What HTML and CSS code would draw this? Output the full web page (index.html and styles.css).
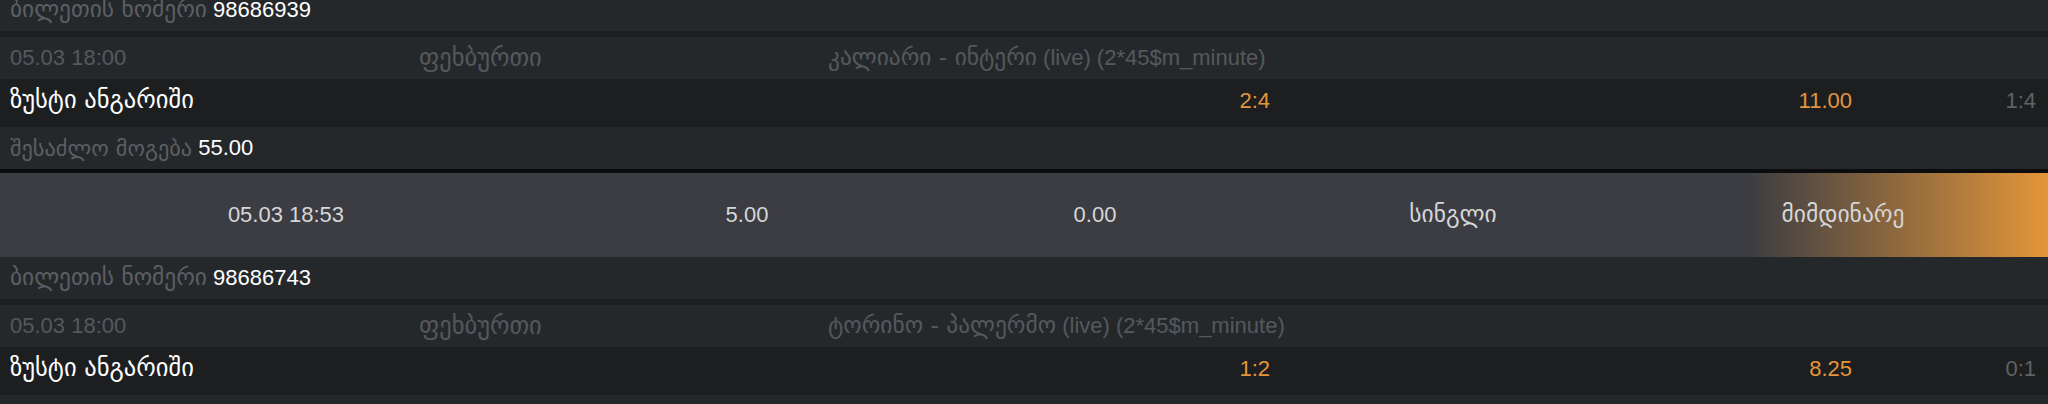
FILE: index.html
```html
<!DOCTYPE html>
<html lang="ka">
<head>
<meta charset="utf-8">
<title>ბილეთები</title>
<link rel="stylesheet" href="styles.css">
</head>
<body>
<div class="list">
  <section class="ticket">
    <div class="row head"><span class="lbl ka">ბილეთის ნომერი</span>&nbsp;<span class="val">98686939</span></div>
    <div class="row match">
      <span class="date">05.03 18:00</span>
      <span class="sport ka">ფეხბურთი</span>
      <span class="name"><span class="ka">კალიარი - ინტერი</span> (live) (2*45$m_minute)</span>
    </div>
    <div class="row bet">
      <span class="market ka">ზუსტი ანგარიში</span>
      <span class="pick">2:4</span>
      <span class="odd">11.00</span>
      <span class="score">1:4</span>
    </div>
    <div class="row win"><span class="lbl ka">შესაძლო მოგება</span>&nbsp;<span class="val">55.00</span></div>
    <div class="summary">
      <span>05.03 18:53</span>
      <span>5.00</span>
      <span>0.00</span>
      <span class="ka-s">სინგლი</span>
      <span class="ka-s">მიმდინარე</span>
    </div>
  </section>
  <section class="ticket">
    <div class="row head"><span class="lbl ka">ბილეთის ნომერი</span>&nbsp;<span class="val">98686743</span></div>
    <div class="row match">
      <span class="date">05.03 18:00</span>
      <span class="sport ka">ფეხბურთი</span>
      <span class="name"><span class="ka">ტორინო - პალერმო</span> (live) (2*45$m_minute)</span>
    </div>
    <div class="row bet">
      <span class="market ka">ზუსტი ანგარიში</span>
      <span class="pick">1:2</span>
      <span class="odd">8.25</span>
      <span class="score">0:1</span>
    </div>
    <div class="row win"></div>
  </section>
</div>
</body>
</html>
```
FILE: styles.css
```css
html, body {
  margin: 0;
  padding: 0;
  background: #1c1e20;
  overflow: hidden;
}
body {
  font-family: "Liberation Sans", "DejaVu Sans", sans-serif;
  font-size: 22px;
  color: #ffffff;
}
.ka {
  font-family: "DejaVu Sans", sans-serif;
  font-size: 23.4px;
  line-height: 1;
}
.sport.ka,
.market.ka {
  font-size: 24.5px;
}
.win .lbl.ka {
  font-size: 22.3px;
}
.ka-s {
  font-family: "DejaVu Sans", sans-serif;
  font-size: 23.5px;
  line-height: 1;
}
.list {
  margin-top: -11px;
}
.ticket {
  background: #1c1e20;
}
.row {
  display: flex;
  align-items: center;
  padding: 0 12px 0 10px;
  white-space: nowrap;
}
.head {
  height: 42px;
  background: #25282b;
  margin-bottom: 6px;
}
.lbl {
  color: #5c5f63;
}
.val {
  color: #ffffff;
}
.match {
  display: grid;
  grid-template-columns: 409px 409px 1fr;
  align-items: center;
  height: 42px;
  background: #25282b;
  color: #55585c;
}
.bet {
  display: grid;
  grid-template-columns: 1fr 100px 582px 184px;
  align-items: center;
  box-sizing: border-box;
  height: 48px;
  padding-bottom: 5px;
  background: #1c1e20;
}
.pick, .odd, .score {
  text-align: right;
}
.pick, .odd {
  color: #e3963a;
}
.score {
  color: #5f6266;
}
.win {
  height: 42px;
  background: #25282b;
}
.summary {
  display: grid;
  grid-template-columns: 572px 350px 346px 370px 410px;
  align-items: center;
  height: 84px;
  border-top: 4px solid #0b0c0e;
  background-color: #3c3d42;
  background-image: linear-gradient(90deg, rgba(227, 150, 58, 0) 85.4%, #e3963a 100%);
  color: #d6d6d8;
  text-align: center;
}
```
